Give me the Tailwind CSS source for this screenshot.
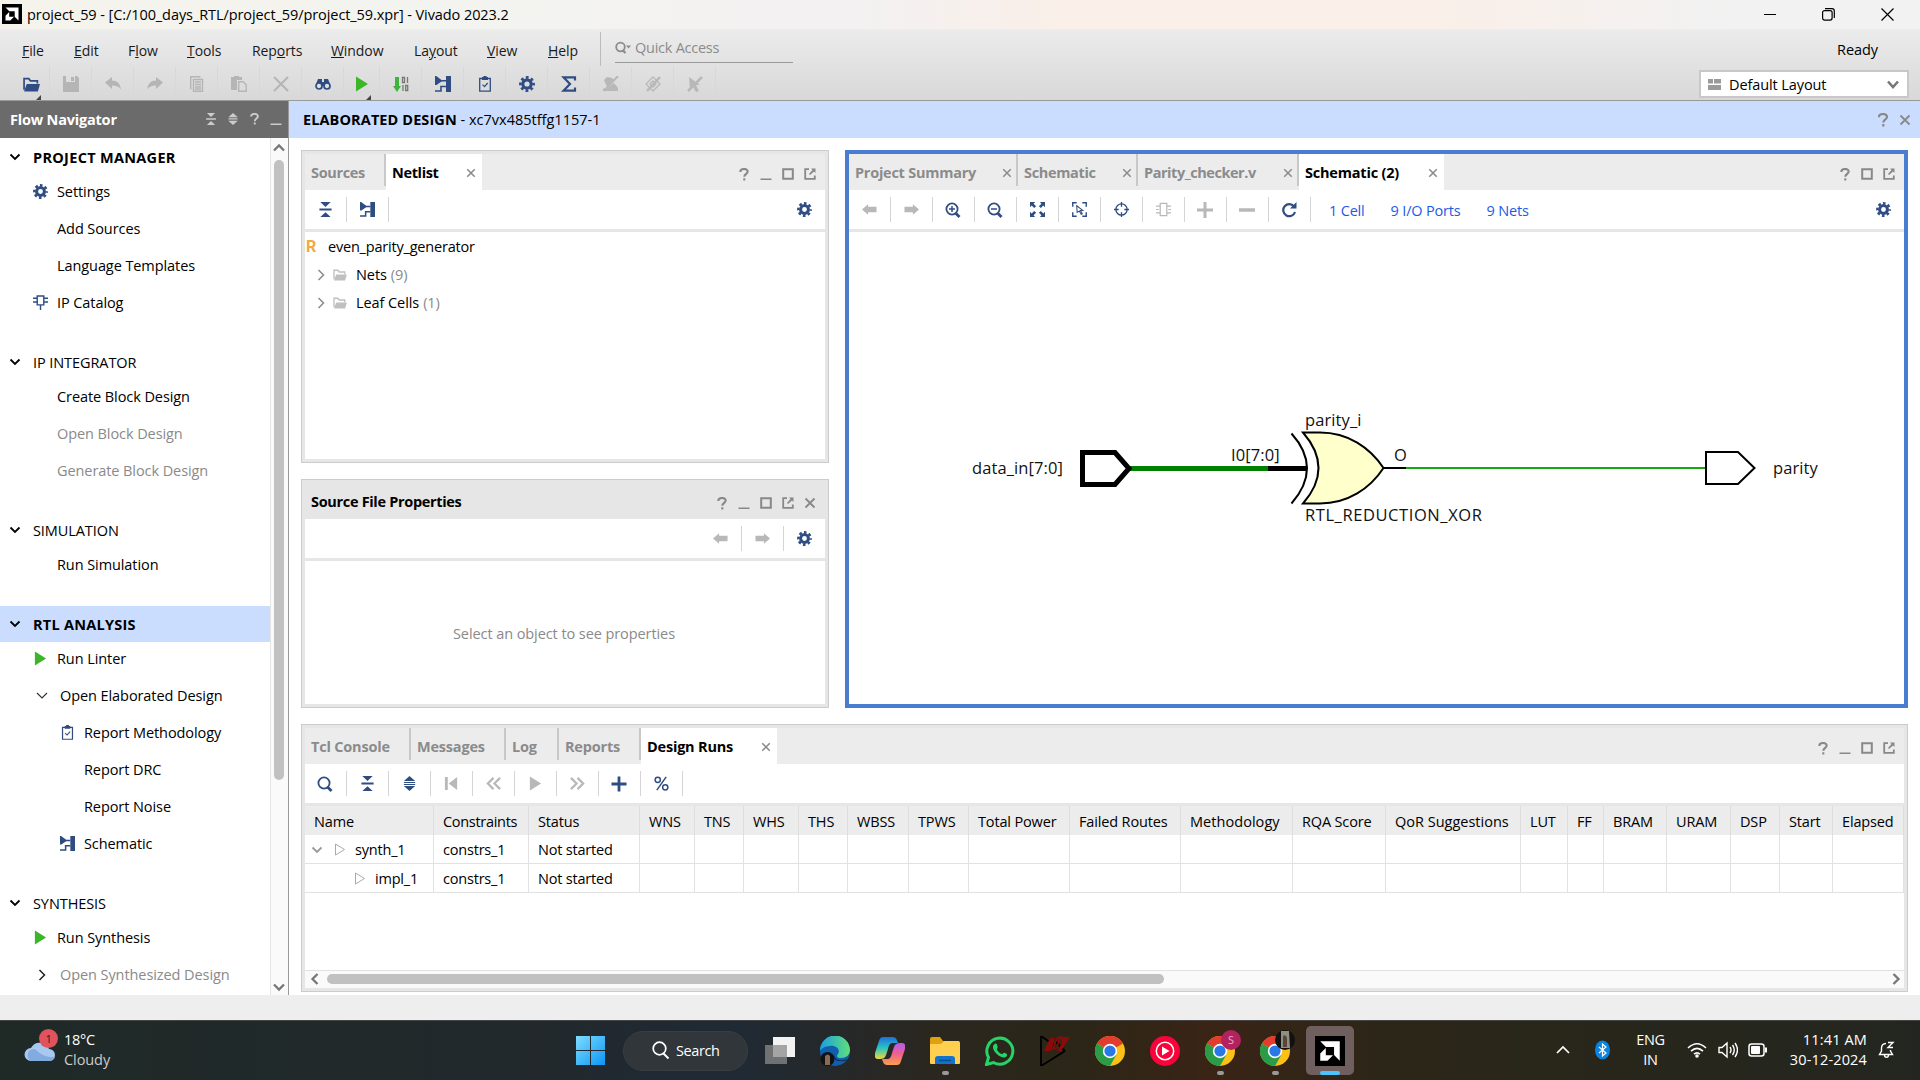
<!DOCTYPE html>
<html lang="en">
<head>
<meta charset="utf-8">
<title>project_59 - Vivado 2023.2</title>
<script src="https://cdn.jsdelivr.net/npm/@tailwindcss/browser@4"></script>
</head>
<body class="w-[1920px] h-[1080px] overflow-hidden flex flex-col bg-white text-black text-[14.5px] leading-[20px] font-['Open_Sans','Noto_Sans',sans-serif] whitespace-nowrap tracking-[-0.08px]">

<svg class="hidden">
  <symbol id="gear" viewBox="0 0 16 16"><circle cx="8" cy="8" r="4.2" fill="none" stroke="currentColor" stroke-width="3.2"/><circle cx="8" cy="8" r="6.6" fill="none" stroke="currentColor" stroke-width="2.6" stroke-dasharray="2.8 2.384" stroke-dashoffset="1.4"/></symbol>
  <symbol id="schem" viewBox="0 0 16 16"><path d="M0 0h1.200l5.300 4v1.500L1.500 9H0zM11 0h5v16h-5z" fill="currentColor"/><path d="M5 4.700h6M0 15h6v-4.500h5" fill="none" stroke="currentColor" stroke-width="1.600"/></symbol>
  <symbol id="clip" viewBox="0 0 16 16"><path d="M2.700 2.500h10.600v12.700H2.700z" fill="none" stroke="currentColor" stroke-width="1.300"/><path d="M5 1h1.500V0h3v1H11v3H5z" fill="currentColor"/><path d="M5.500 8.700l2 2 3.200-3.700" fill="none" stroke="currentColor" stroke-width="1.200"/></symbol>
  <symbol id="collapse" viewBox="0 0 16 16"><path d="M2.500 0h11L8 5.200zM2.500 16h11L8 10.800zM1.500 7h13v2h-13z" fill="currentColor"/></symbol>
  <symbol id="expand" viewBox="0 0 16 16"><path d="M2 5.300L8 0l6 5.300zM2 10.700L8 16l6-5.300zM2 6.300h12v1.200H2zM2 8.500h12v1.200H2z" fill="currentColor"/></symbol>
  <symbol id="help" viewBox="0 0 12 14"><path d="M2 4.200C2 0 10 0 10 3.900c0 2.300-3.700 2.600-3.700 5.600M6.300 11v2.400" fill="none" stroke="currentColor" stroke-width="2.200"/></symbol>
  <symbol id="min" viewBox="0 0 12 12"><path d="M0.500 10.500h11v2h-11z" fill="currentColor"/></symbol>
  <symbol id="max" viewBox="0 0 12 12"><path d="M1.200 1.200h9.600v9.600H1.200z" fill="none" stroke="currentColor" stroke-width="2"/></symbol>
  <symbol id="ext" viewBox="0 0 12 12"><path d="M5 1.200H1.200v9.600h9.600V7.500" fill="none" stroke="currentColor" stroke-width="1.800"/><path d="M7 .5h4.500V5L10 3.500 6 7 5 6l3.500-4z" fill="currentColor"/></symbol>
  <symbol id="x" viewBox="0 0 12 12"><path d="M1.500 1.500l9 9M10.500 1.500l-9 9" fill="none" stroke="currentColor" stroke-width="1.800"/></symbol>
  <symbol id="left" viewBox="0 0 16 16"><path d="M0 8l6.500-5.500V5H15.500v6H6.500v2.500z" fill="currentColor"/></symbol>
  <symbol id="right" viewBox="0 0 16 16"><path d="M16 8L9.500 2.500V5H.5v6h9v2.500z" fill="currentColor"/></symbol>
  <symbol id="down" viewBox="0 0 12 12"><path d="M1.500 3.500L6 8l4.500-4.500" fill="none" stroke="currentColor" stroke-width="1.800"/></symbol>
  <symbol id="chev" viewBox="0 0 12 12"><path d="M3.500 1L8.500 6l-5 5" fill="none" stroke="currentColor" stroke-width="1.500"/></symbol>
  <symbol id="play" viewBox="0 0 16 16"><path d="M2 .5L14 8 2 15.500z" fill="currentColor"/></symbol>
  <symbol id="folder" viewBox="0 0 16 14"><path d="M1 12V1.500h4.500l1.500 2h6.500V6" fill="none" stroke="currentColor" stroke-width="1.600"/><path d="M3.500 6.500H16L14 13.500H1z" fill="currentColor"/></symbol>
  <symbol id="chip" viewBox="0 0 16 16"><path d="M4.500 1h7v9.500h-7zM0 3.500h4.500M0 7.500h4.500M11.500 3.500H16M11.500 7.500H16M8 10.500V16" fill="none" stroke="currentColor" stroke-width="1.500"/></symbol>
  <symbol id="mag" viewBox="0 0 16 16"><circle cx="7" cy="7" r="5.600" fill="none" stroke="currentColor" stroke-width="1.800"/><path d="M10.500 11l4 4" stroke="currentColor" stroke-width="2.800"/></symbol>
  <symbol id="amd" viewBox="0 0 20 20"><path d="M0 0h20v20H0z" fill="#000"/><path d="M3.500 3.500h13v13l-3.800-3.800V7.300H7.300zM7.200 8v4.800H12l-3.700 3.700H3.500v-4.800z" fill="#fff"/></symbol>
  <symbol id="chrome" viewBox="0 0 30 30"><circle cx="15" cy="15" r="15" fill="#fbc116"/><path d="M15 15L2 7.500A15 15 0 0 1 28 7.500z" fill="#e33b2e"/><path d="M15 15L2 7.500A15 15 0 0 0 15 30l6.500-11.500z" fill="#2a9c48"/><circle cx="15" cy="15" r="7.200" fill="#fff"/><circle cx="15" cy="15" r="5.600" fill="#2a78e8"/></symbol>
</svg>

<!-- Title bar -->
<header class="h-[29px] shrink-0 flex items-center bg-[linear-gradient(90deg,#f5f3ec_0%,#f3f3f1_30%,#f3f1f1_45%,#faefe9_55%,#faefe9_75%,#f2f2f2_90%)] pl-[2px]">
  <svg class="w-5 h-5 mt-[-1px]"><use href="#amd"/></svg>
  <span class="ml-[5px] text-[14.500px] tracking-[-0.08px]">project_59 - [C:/100_days_RTL/project_59/project_59.xpr] - Vivado 2023.2</span>
  <svg class="ml-auto w-[13px] h-[13px]" viewBox="0 0 13 13"><path d="M0 6.500h12" stroke="#000"/></svg>
  <svg class="ml-[45px] w-[13px] h-[13px]" viewBox="0 0 13 13" fill="none" stroke="#000" stroke-width="1.200"><rect x=".6" y="2.600" width="9.500" height="9.500" rx="2"/><path d="M3 .6h7a2.300 2.300 0 0 1 2.300 2.300v7"/></svg>
  <svg class="ml-[46px] mr-[26px] w-[13px] h-[13px]" viewBox="0 0 13 13"><path d="M.5.5l12 12M12.500.5l-12 12" stroke="#000" stroke-width="1.200"/></svg>
</header>

<!-- Menu and toolbar -->
<div class="h-[72px] shrink-0 border-b border-[#999] bg-linear-to-b from-[#ececec] to-[#d8d8d8] flex justify-between">
  <div>
    <div class="h-[38px] pt-[3px] flex items-start text-[#1a1a1a]">
      <nav class="flex h-[34px] items-center pl-[22px] pt-[3px] text-[14px]">
        <span class="w-[52px]"><u>F</u>ile</span><span class="w-[54px]"><u>E</u>dit</span><span class="w-[59px]">F<u>l</u>ow</span><span class="w-[65px]"><u>T</u>ools</span><span class="w-[79px]">Rep<u>o</u>rts</span><span class="w-[83px]"><u>W</u>indow</span><span class="w-[73px]">La<u>y</u>out</span><span class="w-[61px]"><u>V</u>iew</span><span class="w-[52px]"><u>H</u>elp</span>
      </nav>
      <div class="w-px h-[34px] bg-[#bbb]"></div>
      <div class="ml-[14px] w-[178px] h-[31px] pt-[2px] border-b border-[#999] flex items-center gap-1 text-[#8b8b8b] tracking-[-0.25px]"><svg class="w-4 h-4" viewBox="0 0 16 16"><circle cx="5.500" cy="7" r="4.300" fill="none" stroke="currentColor" stroke-width="1.800"/><path d="M7.500 10l3 3" stroke="currentColor" stroke-width="2.200"/><path d="M11 5.500h5l-2.500 3z" fill="currentColor"/></svg>Quick Access</div>
    </div>
    <div class="flex pl-[8px] h-[33px] text-[#2f4d82] *:w-[42px] *:flex *:items-center *:justify-center *:border-r *:border-[#d8d8d8] *:relative">
      <div class="pl-[6px] pt-px"><svg class="w-[17px] h-[15px]"><use href="#folder"/></svg><svg class="absolute right-2 bottom-0 w-[5px] h-[5px]"><path d="M5 0v5H0z" fill="#444"/></svg></div>
      <div class="pt-px text-[#b5b5b5]"><svg class="w-4 h-4" viewBox="0 0 16 16"><path d="M0 0h3v6h9V0h2l2 2v14H0zM8 1h3v4H8z" fill="currentColor" /></svg></div>
      <div class="pt-px text-[#b5b5b5]"><svg class="w-4 h-4" viewBox="0 0 16 16"><path d="M0 6.500L7 1v3.500c5 0 8 3 9 9-2-3-5-4-9-4V13z" fill="currentColor"/></svg></div>
      <div class="pt-px text-[#b5b5b5]"><svg class="w-4 h-4" viewBox="0 0 16 16"><path d="M16 6.500L9 1v3.500c-5 0-8 3-9 9 2-3 5-4 9-4V13z" fill="currentColor"/></svg></div>
      <div class="pt-px text-[#b5b5b5]"><svg class="w-4 h-4" viewBox="0 0 16 16"><path d="M2.500 12.500H1.700V.7h9v1M4.500 3.500h9v11.800h-9z" fill="none" stroke="currentColor" stroke-width="1.400"/><path d="M6 6h6M6 8.500h6M6 11h6M6 13h6" stroke="currentColor" stroke-width="1.400"/></svg></div>
      <div class="pt-px text-[#b5b5b5]"><svg class="w-4 h-4" viewBox="0 0 16 16"><path d="M0 1h3V0h5v1h3v3H6v10H0z" fill="currentColor"/><path d="M7.700 5.700h4.500l3 3v6.600H7.700z" fill="none" stroke="currentColor" stroke-width="1.400"/></svg></div>
      <div class="pt-px text-[#b5b5b5]"><svg class="w-4 h-4" viewBox="0 0 16 16"><path d="M1 1l14 14M15 1L1 15" stroke="currentColor" stroke-width="2"/></svg></div>
      <div class="pt-px"><svg class="w-4 h-4" viewBox="0 0 16 16"><path d="M3 3h4v3h2V3h4l2 5v2H1V8z" fill="currentColor"/><circle cx="4" cy="10" r="3" fill="#dfdfdf" stroke="currentColor" stroke-width="1.700"/><circle cx="12" cy="10" r="3" fill="#dfdfdf" stroke="currentColor" stroke-width="1.700"/></svg></div>
      <div class="max-w-[36px] pt-px text-[#3cb528]"><svg class="w-4 h-4"><use href="#play"/></svg><svg class="absolute right-2 bottom-0 w-[5px] h-[5px]"><path d="M5 0v5H0z" fill="#444"/></svg></div>
      <div class="pt-px"><svg class="w-4 h-4" viewBox="0 0 16 16"><path d="M2 1h4v9h2l-4 6-4-6h2z" fill="#3cb53c"/><path d="M9.500 1.500h2v5h-2zM14.500 1v6M10 9v6M12.700 9.500h2v5h-2z" fill="none" stroke="#777" stroke-width="1.300"/></svg></div>
      <div class="pt-px"><svg class="w-4 h-4"><use href="#schem"/></svg></div>
      <div class="pt-px"><svg class="w-4 h-4"><use href="#clip"/></svg></div>
      <div class="pt-px"><svg class="w-4 h-4"><use href="#gear"/></svg></div>
      <div class="pt-px"><svg class="w-4 h-4" viewBox="0 0 16 16"><path d="M14 4.500V1.300H2.500L9 8l-6.500 6.700H14V11.500" fill="none" stroke="currentColor" stroke-width="2.200"/></svg></div>
      <div class="pt-px text-[#b8b8b8]"><svg class="w-4 h-4" viewBox="0 0 16 16"><path d="M1 4l3-3 5 1 2 2-7 7zM0 12.500h4l7-5.500 4 5v3H0z" fill="currentColor"/><path d="M1 15L15 0" stroke="currentColor" stroke-width="2"/></svg></div>
      <div class="pt-px text-[#b8b8b8]"><svg class="w-4 h-4" viewBox="0 0 16 16"><path d="M8 1l7 7-7 7-7-7zM5 8l3-3 3 3-3 3z" fill="none" stroke="currentColor" stroke-width="1.300"/><path d="M2 15L15 1" stroke="currentColor" stroke-width="2.500"/></svg></div>
      <div class="pt-px text-[#b8b8b8]"><svg class="w-4 h-4" viewBox="0 0 16 16"><path d="M2 1l11 8H9l3 6-3 1-3-5-3 2z" fill="currentColor"/><path d="M1 15L15 1" stroke="currentColor" stroke-width="2.500"/></svg></div>
    </div>
  </div>
  <div class="flex flex-col items-end pr-[11px]">
    <div class="h-[41px] flex items-center pt-px pr-[31px]">Ready</div>
    <div class="w-[210px] h-[28px] border-2 border-[#c8c8c8] bg-white flex items-center px-[7px]">
      <svg class="w-[13px] h-[11px]" viewBox="0 0 13 11"><path d="M0 0h5v4.500H0zM6 0h7v4.500H6zM0 6h13v5H0z" fill="#9a9a9a"/></svg>
      <span class="ml-[8px] pt-px tracking-[-0.1px]">Default Layout</span>
      <svg class="ml-auto w-[14px] h-[14px] text-[#777]" viewBox="0 0 14 14"><path d="M2 4.500L7 10l5-5.500" fill="none" stroke="currentColor" stroke-width="2.600"/></svg>
    </div>
  </div>
</div>

<div class="h-[894px] shrink-0 flex">
  <!-- Flow navigator -->
  <aside class="w-[289px] border-r border-[#999] flex flex-col">
    <div class="h-[37px] shrink-0 bg-[#6b6b6b] text-white font-bold flex items-center pl-[10px] pr-[6px] tracking-[-0.2px]">Flow Navigator
      <div class="ml-auto pb-px flex items-center gap-[10px] text-[#ccc]"><svg class="w-3 h-3"><use href="#collapse"/></svg><svg class="w-3 h-3"><use href="#expand"/></svg><svg class="w-[11px] h-3"><use href="#help"/></svg><svg class="w-3 h-3 overflow-visible"><use href="#min"/></svg></div>
    </div>
    <div class="flex-1 flex">
      <div class="w-[270px] pt-[1px] h-[857px] overflow-hidden">
        <div class="h-[36px] flex items-center pl-[9px] gap-[12px] font-bold tracking-[0.3px]"><svg class="w-3 h-3"><use href="#down"/></svg><span class="pt-px">PROJECT MANAGER</span></div>
        <div class="-mt-[2px] mb-[23px] pl-[33px] *:h-[37px] *:flex *:items-center">
          <div><svg class="w-[15px] h-[15px] mr-[9px] text-[#2f4d82]"><use href="#gear"/></svg>Settings</div>
          <div class="pl-[24px]">Add Sources</div>
          <div class="pl-[24px]">Language Templates</div>
          <div><svg class="w-[15px] h-[15px] mr-[9px] text-[#2f4d82]"><use href="#chip"/></svg>IP Catalog</div>
        </div>
        <div class="h-[36px] flex items-center pl-[9px] gap-[12px]"><svg class="w-3 h-3"><use href="#down"/></svg><span class="pt-px">IP INTEGRATOR</span></div>
        <div class="-mt-[2px] mb-[23px] pl-[57px] *:h-[37px] *:flex *:items-center">
          <div>Create Block Design</div><div class="text-[#8a8a8a]">Open Block Design</div><div class="text-[#8a8a8a]">Generate Block Design</div>
        </div>
        <div class="h-[36px] flex items-center pl-[9px] gap-[12px]"><svg class="w-3 h-3"><use href="#down"/></svg><span class="pt-px">SIMULATION</span></div>
        <div class="-mt-[2px] mb-[23px] pl-[57px] *:h-[37px] *:flex *:items-center"><div>Run Simulation</div></div>
        <div class="h-[36px] bg-[#cbddff] flex items-center pl-[9px] gap-[12px] font-bold tracking-[0.25px]"><svg class="w-3 h-3"><use href="#down"/></svg><span class="pt-px">RTL ANALYSIS</span></div>
        <div class="-mt-[2px] mb-[23px] pl-[33px] *:h-[37px] *:flex *:items-center">
          <div><svg class="w-[15px] h-[15px] mr-[9px] text-[#3cb528]"><use href="#play"/></svg>Run Linter</div>
          <div><svg class="w-[12px] h-[12px] ml-[3px] mr-[12px]" viewBox="0 0 12 12"><path d="M1 3l5 5 5-5" fill="none" stroke="#333" stroke-width="1.200"/></svg>Open Elaborated Design</div>
          <div class="pl-[27px]"><svg class="w-[15px] h-[15px] mr-[9px] text-[#2f4d82]"><use href="#clip"/></svg>Report Methodology</div>
          <div class="pl-[51px]">Report DRC</div>
          <div class="pl-[51px]">Report Noise</div>
          <div class="pl-[27px]"><svg class="w-[15px] h-[15px] mr-[9px] text-[#2f4d82]"><use href="#schem"/></svg>Schematic</div>
        </div>
        <div class="h-[36px] flex items-center pl-[9px] gap-[12px]"><svg class="w-3 h-3"><use href="#down"/></svg><span class="pt-px">SYNTHESIS</span></div>
        <div class="-mt-[2px] pl-[33px] *:h-[37px] *:flex *:items-center">
          <div><svg class="w-[15px] h-[15px] mr-[9px] text-[#3cb528]"><use href="#play"/></svg>Run Synthesis</div>
          <div class="text-[#8a8a8a]"><svg class="w-[12px] h-[12px] ml-[3px] mr-[12px] text-[#222]"><use href="#chev"/></svg>Open Synthesized Design</div>
        </div>
      </div>
      <div class="flex-1 border-l border-[#e6e6e6] bg-[#fafafa] flex flex-col items-center pt-[3px] pb-[1px] pr-px text-[#777]">
        <svg class="w-[14px] h-[14px]" viewBox="0 0 14 14"><path d="M2 9.500l5-5 5 5" fill="none" stroke="currentColor" stroke-width="2.300"/></svg>
        <div class="mt-[5px] w-[10px] h-[620px] rounded-full bg-[#c1c1c1]"></div>
        <svg class="mt-auto w-[14px] h-[14px]" viewBox="0 0 14 14"><path d="M2 4.500l5 5 5-5" fill="none" stroke="currentColor" stroke-width="2.300"/></svg>
      </div>
    </div>
  </aside>

  <main class="flex-1 flex flex-col">
    <div class="h-[37px] shrink-0 bg-[#cbddff] flex items-center pl-[14px] pr-[9px]"><b class="tracking-[0.1px]">ELABORATED DESIGN</b><span class="tracking-[0px] whitespace-pre"> - xc7vx485tffg1157-1</span>
      <svg class="ml-auto mr-[10px] w-3 h-[14px] text-[#888]"><use href="#help"/></svg><svg class="w-3 h-3 text-[#888]"><use href="#x"/></svg>
    </div>
    <div class="flex-1 pt-[12px] pl-[12px] pr-[12px] pb-[3px] flex flex-col justify-between">
      <div class="flex h-[558px] justify-between">
        <div class="w-[528px] flex flex-col justify-between">
          <!-- Netlist -->
          <section class="h-[313px] border border-[#ccc]"><div class="h-full border-[3px] border-[#e6e6e6] flex flex-col">
            <div class="h-[36px] shrink-0 bg-[#ececec] flex font-bold tracking-[-0.35px] items-start">
              <div class="w-[81px] h-[32px] border-r-2 border-[#c8c8c8] text-[#8b8b8b] pl-[6px] pt-[9px]">Sources</div>
              <div class="w-[96px] h-[36px] bg-white flex items-center pl-[6px] pt-[1px]">Netlist<svg class="ml-auto mr-[6px] w-[10px] h-[10px] text-[#888]"><use href="#x"/></svg></div>
              <div class="ml-auto mr-[9px] h-full pt-1 flex items-center gap-[10px] text-[#888]"><svg class="w-3 h-[13px]"><use href="#help"/></svg><svg class="w-3 h-3 overflow-visible"><use href="#min"/></svg><svg class="w-3 h-3"><use href="#max"/></svg><svg class="w-3 h-3"><use href="#ext"/></svg></div>
            </div>
            <div class="h-[42px] shrink-0 border-b-[3px] border-[#e6e6e6] flex items-center text-[#2f4d82]">
              <div class="w-[42px] h-[25px] border-r border-[#d5d5d5] flex items-center justify-center"><svg class="w-[15px] h-[15px]"><use href="#collapse"/></svg></div>
              <div class="w-[42px] h-[25px] border-r border-[#d5d5d5] flex items-center justify-center"><svg class="w-[15px] h-[15px]"><use href="#schem"/></svg></div>
              <svg class="ml-auto mr-[13px] w-[15px] h-[15px]"><use href="#gear"/></svg>
            </div>
            <div class="pt-[1px] *:h-[28px] *:flex *:items-center">
              <div class="pl-[1px] tracking-[-0.2px]"><span class="w-[22px] text-[#f5a742] text-[16px] font-bold font-['Roboto',sans-serif]">R</span>even_parity_generator</div>
              <div class="pl-[10px] text-[#8a8a8a]"><svg class="w-3 h-3"><use href="#chev"/></svg><svg class="ml-[6px] mr-[9px] w-[14px] h-[12px] text-[#c0c0c0]"><use href="#folder"/></svg><span class="text-black mr-1">Nets</span>(9)</div>
              <div class="pl-[10px] text-[#8a8a8a]"><svg class="w-3 h-3"><use href="#chev"/></svg><svg class="ml-[6px] mr-[9px] w-[14px] h-[12px] text-[#c0c0c0]"><use href="#folder"/></svg><span class="text-black mr-1">Leaf Cells</span>(1)</div>
            </div>
          </div></section>
          <!-- Properties -->
          <section class="h-[229px] border border-[#ccc]"><div class="h-full border-[3px] border-[#e6e6e6] flex flex-col">
            <div class="h-[36px] shrink-0 bg-[#e6e6e6] flex items-center font-bold tracking-[-0.32px] pl-[6px]"><span class="pt-px">Source File Properties</span>
              <div class="ml-auto mr-[9px] pt-1 flex items-center gap-[10px] text-[#888]"><svg class="w-3 h-[13px]"><use href="#help"/></svg><svg class="w-3 h-3 overflow-visible"><use href="#min"/></svg><svg class="w-3 h-3"><use href="#max"/></svg><svg class="w-3 h-3"><use href="#ext"/></svg><svg class="w-3 h-3"><use href="#x"/></svg></div>
            </div>
            <div class="h-[42px] shrink-0 border-b-[3px] border-[#e6e6e6] flex items-center justify-end text-[#b8b8b8]">
              <div class="w-[42px] h-[25px] border-r border-[#d5d5d5] flex items-center justify-center"><svg class="w-[15px] h-[15px]"><use href="#left"/></svg></div>
              <div class="w-[42px] h-[25px] border-r border-[#d5d5d5] flex items-center justify-center"><svg class="w-[15px] h-[15px]"><use href="#right"/></svg></div>
              <svg class="ml-[13px] mr-[13px] w-[15px] h-[15px] text-[#2f4d82]"><use href="#gear"/></svg>
            </div>
            <div class="flex-1 flex items-center justify-center text-[#8a8a8a] pt-[2px] pr-[2px]">Select an object to see properties</div>
          </div></section>
        </div>
        <!-- Schematic viewer -->
        <section class="w-[1063px] border-4 border-[#4a7dcf] flex flex-col">
          <div class="h-[36px] shrink-0 bg-[#ececec] flex items-start font-bold tracking-[-0.35px] text-[#8b8b8b]">
            <div class="w-[169px] h-[32px] border-r-2 border-[#c8c8c8] flex items-center pt-[5px] pl-[6px]"><span class="tracking-[-0.25px]">Project Summary</span><svg class="ml-auto mr-[4px] w-[10px] h-[10px]"><use href="#x"/></svg></div>
            <div class="w-[120px] h-[32px] border-r-2 border-[#c8c8c8] flex items-center pt-[5px] pl-[6px]">Schematic<svg class="ml-auto mr-[4px] w-[10px] h-[10px]"><use href="#x"/></svg></div>
            <div class="w-[161px] h-[32px] border-r-2 border-[#c8c8c8] flex items-center pt-[5px] pl-[6px]"><span class="tracking-[-0.45px]">Parity_checker.v</span><svg class="ml-auto mr-[4px] w-[10px] h-[10px]"><use href="#x"/></svg></div>
            <div class="w-[145px] h-[36px] bg-white flex items-center pl-[6px] pt-[1px] text-black"><span class="tracking-[-0.2px]">Schematic (2)</span><svg class="ml-auto mr-[6px] w-[10px] h-[10px] text-[#888]"><use href="#x"/></svg></div>
            <div class="ml-auto mr-[9px] h-full pt-1 flex items-center gap-[10px] text-[#888]"><svg class="w-3 h-[13px]"><use href="#help"/></svg><svg class="w-3 h-3"><use href="#max"/></svg><svg class="w-3 h-3"><use href="#ext"/></svg></div>
          </div>
          <div class="h-[42px] shrink-0 border-b-[3px] border-[#e6e6e6] flex items-center text-[#1a5be6]">
            <div class="flex text-[#2f4d82] *:w-[42px] *:h-[25px] *:border-r *:border-[#d5d5d5] *:flex *:items-center *:justify-center *:pr-px">
              <div class="text-[#b8b8b8]"><svg class="w-[15px] h-[15px]"><use href="#left"/></svg></div>
              <div class="text-[#b8b8b8]"><svg class="w-[15px] h-[15px]"><use href="#right"/></svg></div>
              <div><svg class="w-4 h-4" viewBox="0 0 16 16"><use href="#mag"/><path d="M4 7h6M7 4v6" stroke="currentColor" stroke-width="1.500"/></svg></div>
              <div><svg class="w-4 h-4" viewBox="0 0 16 16"><use href="#mag"/><path d="M4 7h6" stroke="currentColor" stroke-width="1.500"/></svg></div>
              <div><svg class="w-[15px] h-[15px]" viewBox="0 0 16 16"><path d="M0 0h5.500L3.800 1.800 6.500 4.500l-2 2L1.800 3.800 0 5.500zM16 0v5.500l-1.800-1.700-2.700 2.700-2-2 2.700-2.700L10.500 0zM0 16v-5.500l1.800 1.700 2.700-2.700 2 2-2.700 2.700L5.500 16zM16 16h-5.500l1.700-1.800-2.700-2.700 2-2 2.700 2.700 1.800-1.700z" fill="currentColor"/></svg></div>
              <div><svg class="w-[15px] h-[15px]" viewBox="0 0 16 16"><path d="M.8 5V.8H5M11 .8h4.200V5M.8 11v4.200H5M11 15.200h4.200V11" fill="none" stroke="currentColor" stroke-width="1.500"/><path d="M5 4l6.500 5H9l2 3.500-1.200.6-2-3.400L5.500 11z" fill="none" stroke="currentColor" stroke-width="1.100"/></svg></div>
              <div><svg class="w-[15px] h-[15px]" viewBox="0 0 16 16"><circle cx="8" cy="8" r="6" fill="none" stroke="currentColor" stroke-width="1.400"/><path d="M8 0v5M8 11v5M0 8h5M11 8h5" stroke="currentColor" stroke-width="1.400"/></svg></div>
              <div class="text-[#b8b8b8]"><svg class="w-[15px] h-[15px]" viewBox="0 0 16 16"><path d="M4.500 1.500h7v13h-7zM0 4.500h4.500M0 11.500h4.500M11.500 4.500H16M11.500 11.500H16M0 8h3M13 8h3" fill="none" stroke="currentColor" stroke-width="1.300"/></svg></div>
              <div class="text-[#b8b8b8]"><svg class="w-4 h-4" viewBox="0 0 16 16"><path d="M0 8h16M8 0v16" stroke="currentColor" stroke-width="3"/></svg></div>
              <div class="text-[#b8b8b8]"><svg class="w-4 h-4" viewBox="0 0 16 16"><path d="M0 8h16" stroke="currentColor" stroke-width="3.500"/></svg></div>
              <div><svg class="w-4 h-4" viewBox="0 0 16 16"><path d="M13 4.500A6 6 0 1 0 14 10" fill="none" stroke="currentColor" stroke-width="2.200"/><path d="M15.500 0v6.500H9z" fill="currentColor"/></svg></div>
            </div>
            <div class="flex gap-[26px] ml-[18px] pt-[2px] tracking-[-0.18px]"><span>1 Cell</span><span>9 I/O Ports</span><span>9 Nets</span></div>
            <svg class="ml-auto mr-[13px] w-[15px] h-[15px] text-[#2f4d82]"><use href="#gear"/></svg>
          </div>
          <svg class="w-[1055px] h-[472px] font-['Open_Sans','Noto_Sans',sans-serif] text-[16.500px] tracking-[0.1px]" viewBox="849 232 1055 472" fill="#111">
            <path d="M1128 468.500h141" stroke="#008000" stroke-width="5"/><path d="M1268 468.500h39" stroke="#000" stroke-width="5"/>
            <path d="M1082.500 452.500h32.500l14 16-14 16h-32.500z" fill="#fff" stroke="#000" stroke-width="5"/>
            <path d="M1291.500 433.500q31 34.500 0 70" fill="none" stroke="#000" stroke-width="2"/>
            <path d="M1303 432.500h17c28 0 50 15 63.500 35.500-13.500 20.500-35.500 35.500-63.500 35.500h-17q31-35.500 0-71z" fill="#ffc" stroke="#000" stroke-width="2"/>
            <path d="M1384 468h22" stroke="#000" stroke-width="2"/><path d="M1406 468h299" stroke="#17a80f" stroke-width="2"/>
            <path d="M1706 452h32l16.500 16-16.500 16h-32z" fill="#fff" stroke="#000" stroke-width="2"/>
            <text x="972" y="474">data_in[7:0]</text><text x="1231" y="461">I0[7:0]</text><text x="1305" y="426">parity_i</text><text x="1394" y="461">O</text><text x="1305" y="521" class="tracking-[0.58px]">RTL_REDUCTION_XOR</text><text x="1773" y="474">parity</text>
          </svg>
        </section>
      </div>

      <!-- Design runs -->
      <section class="h-[268px] border border-[#ccc]"><div class="h-full border-[3px] border-[#e6e6e6] flex flex-col">
        <div class="h-[36px] shrink-0 bg-[#ececec] flex items-start font-bold tracking-[-0.2px] text-[#8b8b8b]">
          <div class="w-[106px] h-[32px] border-r-2 border-[#c8c8c8] pt-[9px] pl-[6px]">Tcl Console</div>
          <div class="w-[95px] h-[32px] border-r-2 border-[#c8c8c8] pt-[9px] pl-[6px]">Messages</div>
          <div class="w-[53px] h-[32px] border-r-2 border-[#c8c8c8] pt-[9px] pl-[6px]">Log</div>
          <div class="w-[82px] h-[32px] border-r-2 border-[#c8c8c8] pt-[9px] pl-[6px]">Reports</div>
          <div class="w-[136px] h-[36px] bg-white flex items-center pl-[6px] pt-[1px] text-black">Design Runs<svg class="ml-auto mr-[6px] w-[10px] h-[10px] text-[#888]"><use href="#x"/></svg></div>
          <div class="ml-auto mr-[9px] h-full pt-1 flex items-center gap-[10px] text-[#888]"><svg class="w-3 h-[13px]"><use href="#help"/></svg><svg class="w-3 h-3 overflow-visible"><use href="#min"/></svg><svg class="w-3 h-3"><use href="#max"/></svg><svg class="w-3 h-3"><use href="#ext"/></svg></div>
        </div>
        <div class="h-[42px] shrink-0 border-b-[3px] border-[#e6e6e6] flex items-center text-[#2f4d82] *:w-[42px] *:h-[25px] *:border-r *:border-[#d5d5d5] *:flex *:items-center *:justify-center *:pr-px">
          <div><svg class="w-4 h-4"><use href="#mag"/></svg></div>
          <div><svg class="w-[15px] h-[15px]"><use href="#collapse"/></svg></div>
          <div><svg class="w-[15px] h-[15px]"><use href="#expand"/></svg></div>
          <div class="text-[#b8b8b8]"><svg class="w-[15px] h-[15px]" viewBox="0 0 16 16"><path d="M1 1h3v14H1zM14 1v14L5 8z" fill="currentColor"/></svg></div>
          <div class="text-[#b8b8b8]"><svg class="w-[15px] h-[15px]" viewBox="0 0 16 16"><path d="M8 2L2 8l6 6M15 2L9 8l6 6" fill="none" stroke="currentColor" stroke-width="2.400"/></svg></div>
          <div class="text-[#b8b8b8]"><svg class="w-[15px] h-[15px]"><use href="#play"/></svg></div>
          <div class="text-[#b8b8b8]"><svg class="w-[15px] h-[15px]" viewBox="0 0 16 16"><path d="M1 2l6 6-6 6M8 2l6 6-6 6" fill="none" stroke="currentColor" stroke-width="2.400"/></svg></div>
          <div><svg class="w-4 h-4" viewBox="0 0 16 16"><path d="M.5 8h15M8 .5v15" stroke="currentColor" stroke-width="2.800"/></svg></div>
          <div><svg class="w-[15px] h-[15px]" viewBox="0 0 16 16" fill="none" stroke="currentColor" stroke-width="1.600"><circle cx="4" cy="4" r="2.800"/><circle cx="12" cy="12" r="2.800"/><path d="M13 1L3 15"/></svg></div>
        </div>
        <div class="grid grid-cols-[129px_95px_111px_55px_49px_55px_49px_61px_60px_101px_111px_112px_93px_135px_47px_36px_63px_64px_49px_53px_71px] h-[29px] shrink-0 bg-[#ececec] *:border-r *:border-[#ddd] *:pl-[9px] *:pt-[6px] tracking-[-0.15px]">
          <div>Name</div><div class="tracking-[-0.3px]">Constraints</div><div>Status</div><div>WNS</div><div>TNS</div><div>WHS</div><div>THS</div><div>WBSS</div><div>TPWS</div><div>Total Power</div><div>Failed Routes</div><div class="tracking-[0.05px]">Methodology</div><div>RQA Score</div><div class="tracking-[0px]">QoR Suggestions</div><div>LUT</div><div>FF</div><div>BRAM</div><div>URAM</div><div>DSP</div><div>Start</div><div>Elapsed</div>
        </div>
        <div class="grid grid-cols-[129px_95px_111px_55px_49px_55px_49px_61px_60px_101px_111px_112px_93px_135px_47px_36px_63px_64px_49px_53px_71px] auto-rows-[29px] *:border-r *:border-b *:border-[#e2e2e2] *:pt-[5px] tracking-[-0.2px]">
          <div class="flex items-start pl-[6px]"><svg class="w-3 h-3 mt-[4px] text-[#999]"><use href="#down"/></svg><svg class="ml-[11px] mr-[9px] mt-[3px] w-[12px] h-[13px]" viewBox="0 0 12 13"><path d="M1.500 1l9 5.500-9 5.500z" fill="none" stroke="#aaa"/></svg>synth_1</div><div class="pl-[9px]">constrs_1</div><div class="pl-[9px]">Not started</div><div></div><div></div><div></div><div></div><div></div><div></div><div></div><div></div><div></div><div></div><div></div><div></div><div></div><div></div><div></div><div></div><div></div><div></div>
          <div class="flex items-start pl-[49px]"><svg class="mr-[9px] mt-[3px] w-[12px] h-[13px]" viewBox="0 0 12 13"><path d="M1.500 1l9 5.500-9 5.500z" fill="none" stroke="#aaa"/></svg>impl_1</div><div class="pl-[9px]">constrs_1</div><div class="pl-[9px]">Not started</div><div></div><div></div><div></div><div></div><div></div><div></div><div></div><div></div><div></div><div></div><div></div><div></div><div></div><div></div><div></div><div></div><div></div><div></div>
        </div>
        <div class="mt-auto h-[18px] border-t border-[#e2e2e2] bg-[#fafafa] flex items-center pb-px pl-[3px] text-[#777]">
          <svg class="w-[14px] h-[14px]" viewBox="0 0 14 14"><path d="M9.500 2l-5 5 5 5" fill="none" stroke="currentColor" stroke-width="2.300"/></svg>
          <div class="ml-[5px] w-[837px] h-[10px] rounded-full bg-[#c1c1c1]"></div>
          <svg class="ml-auto w-[14px] h-[14px]" viewBox="0 0 14 14"><path d="M3.500 2l5 5-5 5" fill="none" stroke="currentColor" stroke-width="2.300"/></svg>
        </div>
      </div></section>
    </div>
  </main>
</div>
<div class="h-[25px] shrink-0 bg-[#eee]"></div>

<!-- Taskbar -->
<footer class="h-[60px] shrink-0 border-t border-[#444] bg-[linear-gradient(90deg,#1f2a27_0%,#22282c_28%,#1f2a35_38%,#2a2720_48%,#2b2617_56%,#3a2416_63%,#2c2618_72%,#232620_100%)] text-white flex items-center">
  <div class="w-[576px] flex items-center pl-[24px]">
    <div class="relative w-[40px] h-[40px] -mt-[4px]">
      <svg class="w-[34px] h-[40px]" viewBox="0 0 34 40"><path d="M7 32a6.500 6.500 0 0 1 0-13 10 10 0 0 1 18 1 6 6 0 0 1 0 12z" fill="#a9c8f0"/><path d="M7 32a6.500 6.500 0 0 1 2-12c5 0 7 9 22 8a6 6 0 0 1-6 4z" fill="#82abe0"/></svg>
      <div class="absolute left-[15px] top-0 w-[19px] h-[19px] rounded-full bg-[#e0525c] text-[11px] leading-[19px] text-center text-[#222]">1</div>
    </div>
    <div class="leading-[20px] -mt-[2px]"><div class="tracking-[-0.3px]">18°C</div><div class="text-[#ccc]">Cloudy</div></div>
  </div>
  <svg class="w-[29px] h-[29px]" viewBox="0 0 29 29"><defs><linearGradient id="w" x2="1" y2="1"><stop stop-color="#7fdcff"/><stop offset="1" stop-color="#0a96f5"/></linearGradient></defs><path d="M0 0h14v14H0zM15 0h14v14H15zM0 15h14v14H0zM15 15h14v14H15z" fill="url(#w)"/></svg>
  <div class="ml-[18px] w-[125px] h-[40px] rounded-full bg-[#31363a] border border-[#3a3e40] flex items-center pl-[27px] gap-[6px] tracking-[-0.4px]"><svg class="w-[19px] h-[19px]" viewBox="0 0 19 19"><circle cx="8.500" cy="7.500" r="6.300" fill="none" stroke="#fff" stroke-width="1.700"/><path d="M12.500 12.500l5 5" stroke="#fff" stroke-width="2"/></svg>Search</div>
  <div class="ml-[17px] flex items-center gap-[25px]">
    <svg class="w-[30px] h-[30px]" viewBox="0 0 30 30"><path d="M8 1h22v20H8z" fill="#f2f2f2"/><path d="M0 9h22v19H0z" fill="#8a8a8a" fill-opacity=".75"/></svg>
    <svg class="w-[30px] h-[30px]" viewBox="0 0 30 30"><defs><linearGradient id="e" x2="1"><stop stop-color="#1b9de2"/><stop offset="1" stop-color="#5fe07a"/></linearGradient></defs><circle cx="15" cy="15" r="15" fill="#0f5fae"/><path d="M0 15a15 15 0 0 1 30-1c0 5-4 8-9 8-4 0-5-2-3-4 3-5-3-9-8-8-5 0-9 3-10 5z" fill="url(#e)"/><path d="M14 18c0 6 7 8 14 5-3 3-6 2-9 2-4 0-6-4-5-7z" fill="#12263a"/><ellipse cx="7.500" cy="23" rx="7" ry="7" fill="#111"/><path d="M5 20q3-3 5 0v9H5z" fill="#8a6a55"/></svg>
    <svg class="w-[30px] h-[30px]" viewBox="0 0 30 30"><defs><linearGradient id="c1" x2="0" y2="1"><stop stop-color="#1d6fe0"/><stop offset=".5" stop-color="#2bc4c0"/><stop offset="1" stop-color="#ecd93a"/></linearGradient><linearGradient id="c2" x2="0" y2="1"><stop stop-color="#b45bf0"/><stop offset=".5" stop-color="#f0608c"/><stop offset="1" stop-color="#fba04a"/></linearGradient></defs><path d="M8 1h10c3 0 4 3 5 6h-5c-3 0-4 2-5 6l-2 6c-1 3-3 4-6 4H3c-3 0-4-3-3-6L4 5c1-3 2-4 4-4z" fill="url(#c1)"/><path d="M22 29H12c-3 0-4-3-5-6h5c3 0 4-2 5-6l2-6c1-3 3-4 6-4h2c3 0 4 3 3 6l-4 12c-1 3-2 4-4 4z" fill="url(#c2)"/></svg>
    <div class="relative w-[30px] h-[30px]"><svg class="w-[30px] h-[30px]" viewBox="0 0 30 30"><path d="M0 3a2 2 0 0 1 2-2h8l3 4h16v8H0z" fill="#e0a010"/><path d="M0 8h11l3-3h14a2 2 0 0 1 2 2v20a1 1 0 0 1-1 1H1a1 1 0 0 1-1-1z" fill="#ffd04f"/><path d="M5 28v-5a3 3 0 0 1 3-3h14a3 3 0 0 1 3 3v5z" fill="#1274cc"/><path d="M9 24.500h12" stroke="#0a4c90" stroke-width="1.500"/></svg><div class="absolute left-[12px] top-[35px] w-[7px] h-[4px] rounded-full bg-[#999]"></div></div>
    <svg class="w-[30px] h-[30px]" viewBox="0 0 30 30"><path d="M1.500 28.500l2-7A13 13 0 1 1 8.500 26.500z" fill="none" stroke="#25d366" stroke-width="3"/><path d="M9 8.500c2-2 3-.5 3.500 2s-1.500 2 0 4 3 3.500 4.500 3.500 1-2 3-1 3 1.500 1.500 3.500c-3 4-14-4-13.500-9.500 0-1 .5-2 1-2.500z" fill="#25d366"/></svg>
    <svg class="w-[30px] h-[30px]" viewBox="0 0 30 30"><path d="M1 0v30l24-15M1 0l13 9M16 6l9 9" fill="none" stroke="#000" stroke-width="1.800"/><path d="M4 15L10 2h5l-4 13zM20 1h10l-9 14h-4l5-8z" fill="#8d0a0a"/><path d="M13 13l4-11 3-1-3 11z" fill="none" stroke="#8d0a0a" stroke-width="1.500"/></svg>
    <svg class="w-[30px] h-[30px]"><use href="#chrome"/></svg>
    <svg class="w-[30px] h-[30px]" viewBox="0 0 30 30"><circle cx="15" cy="15" r="15" fill="#f8033a"/><circle cx="15" cy="15" r="8.700" fill="none" stroke="#fff" stroke-width="1.500"/><path d="M12 10.500l7.500 4.500-7.500 4.500z" fill="#fff"/></svg>
    <div class="relative w-[30px] h-[30px]"><svg class="w-[30px] h-[30px]"><use href="#chrome"/></svg><div class="absolute left-[16px] -top-[6px] w-5 h-5 rounded-full bg-[#b3215e] text-[11px] leading-5 text-center text-[#eac]">S</div><div class="absolute left-[12px] top-[35px] w-[7px] h-[4px] rounded-full bg-[#999]"></div></div>
    <div class="relative w-[30px] h-[30px]"><svg class="w-[30px] h-[30px]"><use href="#chrome"/></svg><svg class="absolute left-[15px] -top-[6px] w-5 h-5" viewBox="0 0 20 20"><circle cx="10" cy="10" r="10" fill="#111"/><path d="M6 1h8l1 17H6z" fill="#8f8f80"/><path d="M8 6q3-2 4 2v9H8z" fill="#5a4538"/></svg><div class="absolute left-[12px] top-[35px] w-[7px] h-[4px] rounded-full bg-[#999]"></div></div>
    <div class="relative -ml-[9px] w-[48px] h-[49px] rounded-[5px] bg-[#6f5f5e] flex items-center justify-center"><svg class="w-[30px] h-[30px]"><use href="#amd"/></svg><div class="absolute left-[14px] bottom-0 w-5 h-1 rounded-full bg-[#4cc2ff]"></div></div>
  </div>
  <div class="ml-auto pr-[25px] flex items-center text-center">
    <svg class="w-[14px] h-[10px] -mt-px" viewBox="0 0 14 10"><path d="M1 8l6-6 6 6" fill="none" stroke="#fff" stroke-width="1.700"/></svg>
    <svg class="ml-[25px] w-[15px] h-[20px] -mt-px" viewBox="0 0 15 20"><ellipse cx="7.500" cy="10" rx="7.500" ry="9.500" fill="#0a84e0"/><path d="M4 7l7 6-3.500 3V4L11 7l-7 6" fill="none" stroke="#fff" stroke-width="1.200"/></svg>
    <div class="ml-[18px] w-[45px] leading-[20px] -mt-[2px] tracking-[-0.3px]">ENG<br>IN</div>
    <svg class="ml-[14px] w-[20px] h-[16px] -mt-px" viewBox="0 0 20 16" fill="none" stroke="#fff" stroke-width="1.600"><path d="M1 6q9-8.500 18 0M4 9.200q6-5.500 12 0M7 12.200q3-2.600 6 0"/><circle cx="10" cy="14" r="1" fill="#fff"/></svg>
    <svg class="ml-[11px] w-[20px] h-[18px] -mt-px" viewBox="0 0 20 18" fill="none" stroke="#fff" stroke-width="1.400"><path d="M1 6.500v5h3l5 4.500V2L4 6.500zM12 6q2 3 0 6M14.500 4q3.500 5 0 10M17 2q5 7 0 14"/></svg>
    <svg class="ml-[10px] w-[20px] h-[14px] -mt-px" viewBox="0 0 20 14"><rect x="1" y="1" width="15" height="12" rx="2.500" fill="none" stroke="#fff" stroke-width="1.500"/><rect x="3" y="3" width="9" height="8" rx="1" fill="#fff"/><path d="M18 4.500v5" stroke="#fff" stroke-width="2"/></svg>
    <div class="ml-[15px] w-[84px] text-right leading-[20px] -mt-[2px] tracking-[0.15px]">11:41 AM<br>30-12-2024</div>
    <svg class="ml-[11px] w-[17px] h-[18px] -mt-px" viewBox="0 0 17 18" fill="none" stroke="#fff" stroke-width="1.400"><path d="M8 2.500c-3 0-4.500 2-4.500 4.500v3l-2 3.500h13l-2-3.500V9M6.500 14c0 3 4 3 4 0M10 1.500h5l-5 5h5"/></svg>
  </div>
</footer>
</body>
</html>
